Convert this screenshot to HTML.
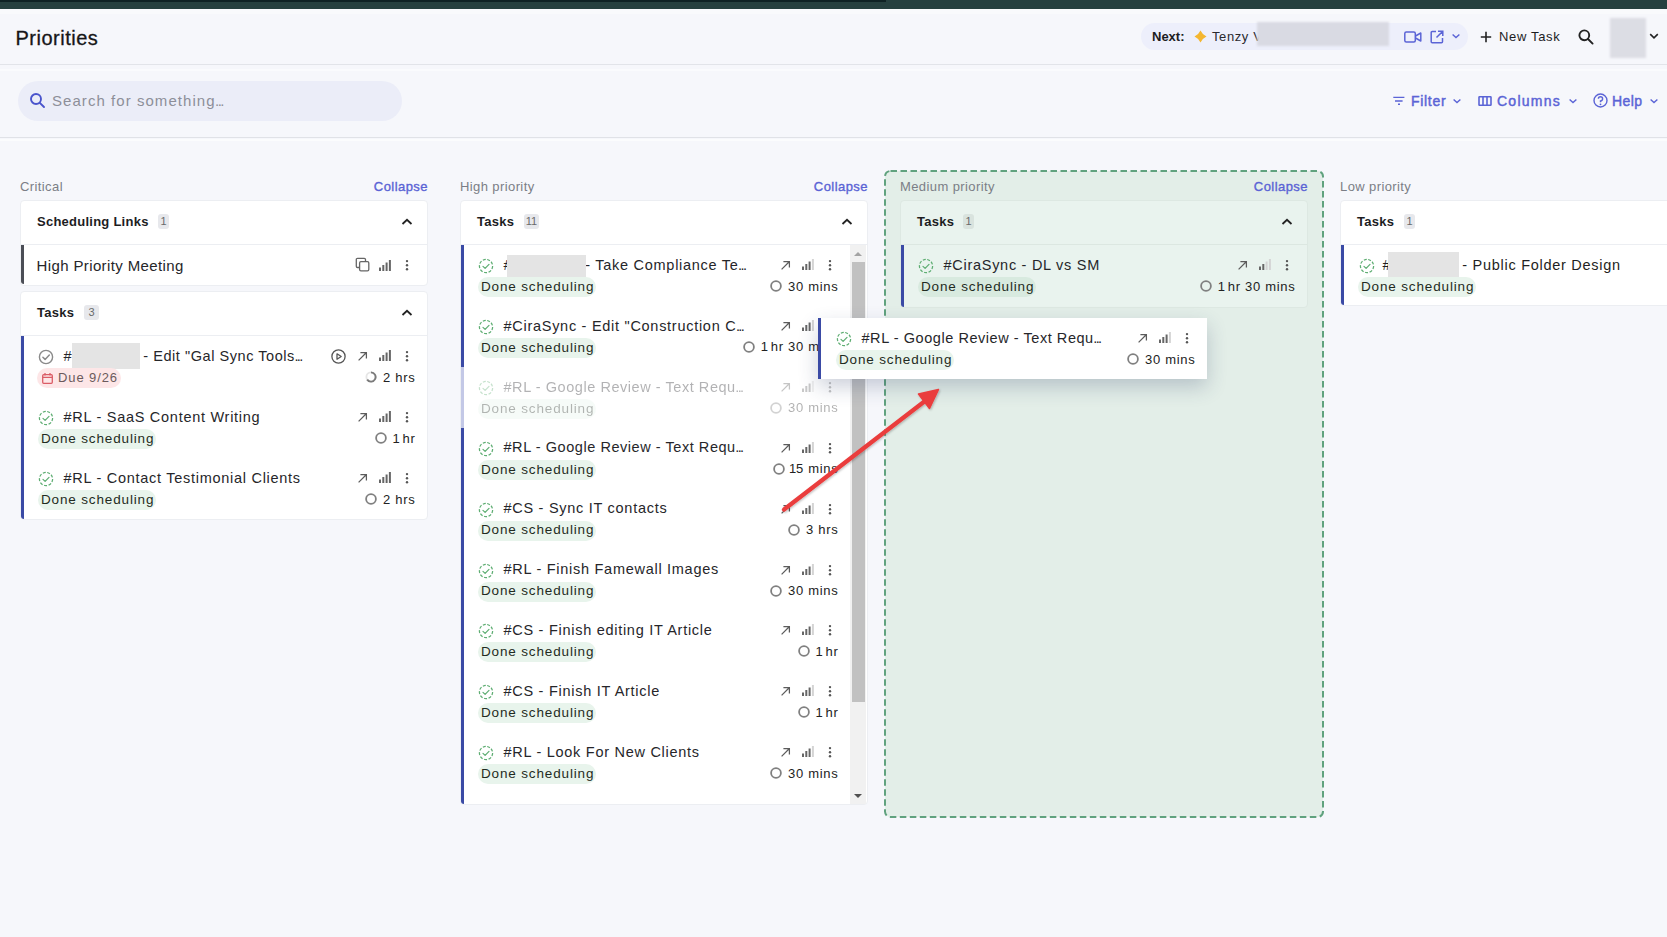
<!DOCTYPE html><html><head><meta charset="utf-8"><style>
html,body{margin:0;padding:0;}
body{width:1667px;height:937px;overflow:hidden;position:relative;background:#f6f7fb;font-family:"Liberation Sans", sans-serif;}
.t{position:absolute;white-space:nowrap;line-height:1;}
.ic{position:absolute;overflow:visible;}
.el{letter-spacing:-1.6px;margin-left:-0.5px}
.one{letter-spacing:-1.4px;margin-left:-0.8px}
.b{position:absolute;box-sizing:border-box;}

</style></head><body>
<div class="b" style="left:0px;top:0px;width:1667px;height:9px;background:#26403f;"></div>
<div class="b" style="left:0px;top:0px;width:886px;height:2px;background:#0f2224;"></div>
<div class="b" style="left:0px;top:9px;width:1667px;height:5px;background:#f9fafc;"></div>
<div class="b" style="left:0px;top:64px;width:1667px;height:1px;background:#e2e4e9;"></div>
<div class="t" style="left:15.5px;top:28.07px;font-size:20px;font-weight:400;color:#161618;letter-spacing:0.5px;-webkit-text-stroke:0.3px #161618;">Priorities</div>
<div class="b" style="left:1141px;top:23px;width:327px;height:27px;background:#edeffb;border-radius:14px;"></div>
<div class="t" style="left:1152px;top:30.00px;font-size:13px;font-weight:700;color:#1d1d1f;letter-spacing:0px;">Next:</div>
<svg class="ic" style="left:1193px;top:30px;" width="14" height="14" viewBox="0 0 14 14"><path d="M7.5 0.5 Q9.4 4.6 13.5 6.5 Q9.4 8.4 7.5 12.5 Q5.6 8.4 1.5 6.5 Q5.6 4.6 7.5 0.5 Z" fill="#f4b630"/></svg>
<div class="t" style="left:1212px;top:30.00px;font-size:13px;font-weight:400;color:#2a2a2e;letter-spacing:0.6px;">Tenzy V</div>
<div class="b" style="left:1257px;top:22px;width:132px;height:24px;background:#d9dae3;filter:blur(0.8px);"></div>
<svg class="ic" style="left:1404px;top:31px;" width="18" height="12" viewBox="0 0 18 12"><rect x="0.8" y="1" width="10.5" height="10" rx="1.5" fill="none" stroke="#5b64d6" stroke-width="1.5"/><path d="M11.5 5 L16.8 2 V10 L11.5 7" fill="none" stroke="#5b64d6" stroke-width="1.5" stroke-linejoin="round"/></svg>
<svg class="ic" style="left:1430px;top:30px;" width="14" height="14" viewBox="0 0 14 14"><path d="M6 1.5 H2.2 A1 1 0 0 0 1.2 2.5 V11.8 A1 1 0 0 0 2.2 12.8 H11.5 A1 1 0 0 0 12.5 11.8 V8 M8 1.2 H12.8 V6 M12.8 1.2 L6.5 7.5" fill="none" stroke="#5b64d6" stroke-width="1.5"/></svg>
<svg class="ic" style="left:1451px;top:33px;" width="10" height="6" viewBox="0 0 10 6"><path d="M1.6 1.4 L5 4.6 L8.4 1.4" fill="none" stroke="#5b64d6" stroke-width="1.4"/></svg>
<svg class="ic" style="left:1480px;top:31px;" width="12" height="12" viewBox="0 0 12 12"><path d="M6 0.8 V11.2 M0.8 6 H11.2" stroke="#222" stroke-width="1.6"/></svg>
<div class="t" style="left:1499px;top:30.00px;font-size:13px;font-weight:400;color:#1d1d1f;letter-spacing:0.65px;">New Task</div>
<svg class="ic" style="left:1578px;top:29px;" width="16" height="16" viewBox="0 0 16 16"><circle cx="6.3" cy="6.3" r="4.9" fill="none" stroke="#222" stroke-width="1.9"/><path d="M10 10 L14.6 14.6" stroke="#222" stroke-width="1.9" stroke-linecap="round"/></svg>
<div class="b" style="left:1610px;top:18px;width:36px;height:40px;background:#dcdde4;filter:blur(1px);"></div>
<svg class="ic" style="left:1649px;top:33px;" width="10" height="6" viewBox="0 0 10 6"><path d="M1.2 1.2 L5 4.8 L8.8 1.2" fill="none" stroke="#222" stroke-width="1.6"/></svg>
<div class="b" style="left:18px;top:81px;width:384px;height:40px;background:#ebedf8;border-radius:20px;"></div>
<svg class="ic" style="left:29px;top:92px;" width="17" height="17" viewBox="0 0 17 17"><circle cx="7" cy="7" r="5" fill="none" stroke="#4a54cc" stroke-width="1.9"/><path d="M10.8 10.8 L15 15" stroke="#4a54cc" stroke-width="1.9" stroke-linecap="round"/></svg>
<div class="t" style="left:52px;top:93.30px;font-size:15px;font-weight:400;color:#8d8f99;letter-spacing:1.05px;">Search for something<span class=el>...</span></div>
<div class="b" style="left:0px;top:137px;width:1667px;height:1px;background:#e0e2e7;"></div>
<div class="b" style="left:0px;top:139px;width:1667px;height:2px;background:#fbfcfd;"></div>
<div class="b" style="left:0px;top:69px;width:1667px;height:2px;background:#fafbfd;"></div>
<svg class="ic" style="left:1392px;top:95px;" width="14" height="11" viewBox="0 0 14 11"><path d="M1.3 2.4 H12.4 M3 6 H10.6 M6 9.3 H8" stroke="#5b64d6" stroke-width="1.4"/></svg>
<div class="t" style="left:1411px;top:94.15px;font-size:14px;font-weight:400;color:#5b64d6;letter-spacing:0.7px;-webkit-text-stroke:0.45px #5b64d6;">Filter</div>
<svg class="ic" style="left:1452px;top:98px;" width="10" height="6" viewBox="0 0 10 6"><path d="M1.6 1.4 L5 4.6 L8.4 1.4" fill="none" stroke="#5b64d6" stroke-width="1.4"/></svg>
<svg class="ic" style="left:1478px;top:95px;" width="15" height="11" viewBox="0 0 15 11"><rect x="1" y="1.7" width="12" height="8.6" rx="0.6" fill="none" stroke="#5b64d6" stroke-width="1.6"/><path d="M5 1.7 V10.3 M9 1.7 V10.3" stroke="#5b64d6" stroke-width="1.6"/></svg>
<div class="t" style="left:1497px;top:94.15px;font-size:14px;font-weight:400;color:#5b64d6;letter-spacing:1.25px;-webkit-text-stroke:0.45px #5b64d6;">Columns</div>
<svg class="ic" style="left:1568px;top:98px;" width="10" height="6" viewBox="0 0 10 6"><path d="M1.6 1.4 L5 4.6 L8.4 1.4" fill="none" stroke="#5b64d6" stroke-width="1.4"/></svg>
<svg class="ic" style="left:1593px;top:93px;" width="15" height="15" viewBox="0 0 15 15"><circle cx="7.5" cy="7.5" r="6.5" fill="none" stroke="#5b64d6" stroke-width="1.4"/><path d="M5.4 5.8 A2.1 2.1 0 1 1 7.5 7.9 V9.2" fill="none" stroke="#5b64d6" stroke-width="1.4"/><circle cx="7.5" cy="11.3" r="0.9" fill="#5b64d6"/></svg>
<div class="t" style="left:1612px;top:94.15px;font-size:14px;font-weight:400;color:#5b64d6;letter-spacing:0.4px;-webkit-text-stroke:0.45px #5b64d6;">Help</div>
<svg class="ic" style="left:1649px;top:98px;" width="10" height="6" viewBox="0 0 10 6"><path d="M1.6 1.4 L5 4.6 L8.4 1.4" fill="none" stroke="#5b64d6" stroke-width="1.4"/></svg>
<svg class="ic" style="left:884px;top:170px" width="440" height="648"><rect x="1" y="1" width="438" height="646" rx="5.5" fill="#e3eee8" stroke="#60a27e" stroke-width="2" stroke-dasharray="6.5 3.5"/></svg>
<div class="t" style="left:20px;top:179.50px;font-size:13px;font-weight:400;color:#7b7e86;letter-spacing:0.4px;">Critical</div>
<div class="t" style="right:1239px;top:179.50px;font-size:13px;font-weight:400;color:#5a63d5;letter-spacing:0.45px;-webkit-text-stroke:0.35px #5a63d5;">Collapse</div>
<div class="b" style="left:20px;top:200px;width:408px;height:86px;background:#fff;border:1px solid #eceef2;border-radius:4px;"></div>
<div class="b" style="left:21px;top:244px;width:406px;height:1px;background:#eceef2;"></div>
<div class="t" style="left:37px;top:215.00px;font-size:13px;font-weight:700;color:#1d1d1f;letter-spacing:0.25px;">Scheduling Links</div>
<div class="b" style="left:158px;top:214px;width:11px;height:15px;background:#e7e8ec;border-radius:3px;"></div>
<div class="t" style="left:163.5px;top:216.19px;font-size:11px;font-weight:400;color:#6a6a6a;letter-spacing:0px;transform:translateX(-50%);">1</div>
<svg class="ic" style="left:401px;top:218px;" width="12" height="8" viewBox="0 0 12 8"><path d="M1.5 6 L6 1.8 L10.5 6" fill="none" stroke="#222" stroke-width="1.8"/></svg>
<div class="b" style="left:21px;top:245px;width:3px;height:39px;background:#4b4e56;border-radius:0 0 0 3px;"></div>
<div class="t" style="left:36.5px;top:257.80px;font-size:15px;font-weight:400;color:#26262a;letter-spacing:0.38px;">High Priority Meeting</div>
<svg class="ic" style="left:355px;top:257px;" width="15" height="15" viewBox="0 0 15 15"><path d="M4 10.5 H2.5 A1.2 1.2 0 0 1 1.3 9.3 V2.5 A1.2 1.2 0 0 1 2.5 1.3 H9.3 A1.2 1.2 0 0 1 10.5 2.5 V4" fill="none" stroke="#666" stroke-width="1.3"/><rect x="4.6" y="4.6" width="9.2" height="9.2" rx="1.3" fill="none" stroke="#666" stroke-width="1.3"/></svg>
<svg class="ic" style="left:379px;top:260px;" width="12" height="11" viewBox="0 0 12 11"><rect x="0.0" y="7.5" width="2" height="3.5" fill="#666"/><rect x="3.3" y="5" width="2" height="6" fill="#666"/><rect x="6.6" y="2.5" width="2" height="8.5" fill="#666"/><rect x="9.9" y="0" width="2" height="11" fill="#666"/></svg>
<svg class="ic" style="left:405px;top:260px;" width="4" height="11" viewBox="0 0 4 11"><circle cx="2" cy="1.1" r="1.2" fill="#555"/><circle cx="2" cy="5.2" r="1.2" fill="#555"/><circle cx="2" cy="9.3" r="1.2" fill="#555"/></svg>
<div class="b" style="left:20px;top:291px;width:408px;height:229px;background:#fff;border:1px solid #eceef2;border-radius:4px;"></div>
<div class="b" style="left:21px;top:335px;width:406px;height:1px;background:#eceef2;"></div>
<div class="t" style="left:37px;top:306.00px;font-size:13px;font-weight:700;color:#1d1d1f;letter-spacing:0.25px;">Tasks</div>
<div class="b" style="left:84px;top:305px;width:15px;height:15px;background:#e7e8ec;border-radius:3px;"></div>
<div class="t" style="left:91.5px;top:307.19px;font-size:11px;font-weight:400;color:#6a6a6a;letter-spacing:0px;transform:translateX(-50%);">3</div>
<svg class="ic" style="left:401px;top:309px;" width="12" height="8" viewBox="0 0 12 8"><path d="M1.5 6 L6 1.8 L10.5 6" fill="none" stroke="#222" stroke-width="1.8"/></svg>
<div class="b" style="left:21px;top:336px;width:3px;height:183px;background:#3a4aa5;border-radius:0 0 0 3px;"></div>
<svg class="ic" style="left:38px;top:349px;" width="16" height="16" viewBox="0 0 16 16"><circle cx="8" cy="8" r="6.6" fill="none" stroke="#8a8a8a" stroke-width="1.4"/><path d="M4.9 8.2 L7.1 10.4 L11.3 6.1" fill="none" stroke="#8a8a8a" stroke-width="1.5" stroke-linecap="round" stroke-linejoin="round"/></svg>
<div class="t" style="left:63.5px;top:348.73px;font-size:14.5px;font-weight:400;color:#26262a;letter-spacing:0.72px;">#<span style="display:inline-block;width:71px"></span><span style="letter-spacing:0.55px">- Edit "Gal Sync Tools</span><span class=el>...</span></div>
<div class="b" style="left:72px;top:343px;width:68px;height:26px;background:#e4e4e4;filter:blur(0.6px);"></div>
<div class="b" style="left:37px;top:368px;width:84px;height:20px;background:#fde6e7;border-radius:10px;"></div>
<svg class="ic" style="left:42px;top:373px;" width="11" height="11" viewBox="0 0 11 11"><rect x="0.7" y="1.7" width="9.6" height="8.6" rx="1" fill="none" stroke="#db5c66" stroke-width="1.3"/><path d="M0.7 4.4 H10.3 M3 0 V2.5 M8 0 V2.5" stroke="#db5c66" stroke-width="1.3"/></svg>
<div class="t" style="left:58px;top:371.00px;font-size:13px;font-weight:400;color:#6b5a5c;letter-spacing:0.9px;">Due 9/26</div>
<svg class="ic" style="left:331px;top:349px;" width="15" height="15" viewBox="0 0 15 15"><circle cx="7.5" cy="7.5" r="6.6" fill="none" stroke="#555" stroke-width="1.3"/><path d="M6 4.8 L10.2 7.5 L6 10.2 Z" fill="none" stroke="#555" stroke-width="1.3" stroke-linejoin="round"/></svg>
<svg class="ic" style="left:357px;top:351px;" width="11" height="11" viewBox="0 0 11 11"><path d="M1.6 9.4 L9.2 1.8 M3.4 1.6 H9.4 V7.6" fill="none" stroke="#5c5c5c" stroke-width="1.25"/></svg>
<svg class="ic" style="left:379px;top:350px;" width="12" height="11" viewBox="0 0 12 11"><rect x="0.0" y="7.5" width="2" height="3.5" fill="#666"/><rect x="3.3" y="5" width="2" height="6" fill="#666"/><rect x="6.6" y="2.5" width="2" height="8.5" fill="#666"/><rect x="9.9" y="0" width="2" height="11" fill="#666"/></svg>
<svg class="ic" style="left:405px;top:351px;" width="4" height="11" viewBox="0 0 4 11"><circle cx="2" cy="1.1" r="1.2" fill="#555"/><circle cx="2" cy="5.2" r="1.2" fill="#555"/><circle cx="2" cy="9.3" r="1.2" fill="#555"/></svg>
<div class="t" style="right:1251.5px;top:370px;height:14px;display:flex;align-items:center;font-size:13px;color:#222;letter-spacing:0.7px;"><svg width="12" height="12" viewBox="0 0 12 12" style="margin-right:6px;flex:none"><circle cx="6" cy="6" r="4.6" fill="none" stroke="#e6e6e6" stroke-width="1.9"/><path d="M6 1.4 A4.6 4.6 0 1 1 2.2 8.6" fill="none" stroke="#7a7a7a" stroke-width="1.9"/></svg><span>2 hrs</span></div>
<svg class="ic" style="left:38px;top:410px;" width="16" height="16" viewBox="0 0 16 16"><circle cx="8" cy="8" r="6.6" fill="none" stroke="#5fae73" stroke-width="1.25" stroke-dasharray="3 1.6" transform="rotate(-80 8 8)"/><path d="M5 8.4 L7.1 10.4 L11 6.4" fill="none" stroke="#5fae73" stroke-width="1.25" stroke-linecap="round" stroke-linejoin="round"/></svg>
<div class="t" style="left:63.5px;top:409.73px;font-size:14.5px;font-weight:400;color:#26262a;letter-spacing:0.72px;">#RL - SaaS Content Writing</div>
<div class="b" style="left:38px;top:429px;width:118px;height:20px;background:#e8f4ec;border-radius:10px;"></div>
<div class="t" style="left:41px;top:431.87px;font-size:13.5px;font-weight:400;color:#1f2b22;letter-spacing:0.85px;">Done scheduling</div>
<svg class="ic" style="left:357px;top:412px;" width="11" height="11" viewBox="0 0 11 11"><path d="M1.6 9.4 L9.2 1.8 M3.4 1.6 H9.4 V7.6" fill="none" stroke="#5c5c5c" stroke-width="1.25"/></svg>
<svg class="ic" style="left:379px;top:411px;" width="12" height="11" viewBox="0 0 12 11"><rect x="0.0" y="7.5" width="2" height="3.5" fill="#666"/><rect x="3.3" y="5" width="2" height="6" fill="#666"/><rect x="6.6" y="2.5" width="2" height="8.5" fill="#666"/><rect x="9.9" y="0" width="2" height="11" fill="#666"/></svg>
<svg class="ic" style="left:405px;top:412px;" width="4" height="11" viewBox="0 0 4 11"><circle cx="2" cy="1.1" r="1.2" fill="#555"/><circle cx="2" cy="5.2" r="1.2" fill="#555"/><circle cx="2" cy="9.3" r="1.2" fill="#555"/></svg>
<div class="t" style="right:1251.5px;top:431px;height:14px;display:flex;align-items:center;font-size:13px;color:#222;letter-spacing:0.7px;"><svg width="12" height="12" viewBox="0 0 12 12" style="margin-right:6px;flex:none"><circle cx="6" cy="6" r="4.9" fill="none" stroke="#808080" stroke-width="1.8"/></svg><span><span class=one>1</span> hr</span></div>
<svg class="ic" style="left:38px;top:471px;" width="16" height="16" viewBox="0 0 16 16"><circle cx="8" cy="8" r="6.6" fill="none" stroke="#5fae73" stroke-width="1.25" stroke-dasharray="3 1.6" transform="rotate(-80 8 8)"/><path d="M5 8.4 L7.1 10.4 L11 6.4" fill="none" stroke="#5fae73" stroke-width="1.25" stroke-linecap="round" stroke-linejoin="round"/></svg>
<div class="t" style="left:63.5px;top:470.73px;font-size:14.5px;font-weight:400;color:#26262a;letter-spacing:0.72px;">#RL - Contact Testimonial Clients</div>
<div class="b" style="left:38px;top:490px;width:118px;height:20px;background:#e8f4ec;border-radius:10px;"></div>
<div class="t" style="left:41px;top:492.87px;font-size:13.5px;font-weight:400;color:#1f2b22;letter-spacing:0.85px;">Done scheduling</div>
<svg class="ic" style="left:357px;top:473px;" width="11" height="11" viewBox="0 0 11 11"><path d="M1.6 9.4 L9.2 1.8 M3.4 1.6 H9.4 V7.6" fill="none" stroke="#5c5c5c" stroke-width="1.25"/></svg>
<svg class="ic" style="left:379px;top:472px;" width="12" height="11" viewBox="0 0 12 11"><rect x="0.0" y="7.5" width="2" height="3.5" fill="#666"/><rect x="3.3" y="5" width="2" height="6" fill="#666"/><rect x="6.6" y="2.5" width="2" height="8.5" fill="#666"/><rect x="9.9" y="0" width="2" height="11" fill="#666"/></svg>
<svg class="ic" style="left:405px;top:473px;" width="4" height="11" viewBox="0 0 4 11"><circle cx="2" cy="1.1" r="1.2" fill="#555"/><circle cx="2" cy="5.2" r="1.2" fill="#555"/><circle cx="2" cy="9.3" r="1.2" fill="#555"/></svg>
<div class="t" style="right:1251.5px;top:492px;height:14px;display:flex;align-items:center;font-size:13px;color:#222;letter-spacing:0.7px;"><svg width="12" height="12" viewBox="0 0 12 12" style="margin-right:6px;flex:none"><circle cx="6" cy="6" r="4.9" fill="none" stroke="#808080" stroke-width="1.8"/></svg><span>2 hrs</span></div>
<div class="t" style="left:460px;top:179.50px;font-size:13px;font-weight:400;color:#7b7e86;letter-spacing:0.4px;">High priority</div>
<div class="t" style="right:799px;top:179.50px;font-size:13px;font-weight:400;color:#5a63d5;letter-spacing:0.45px;-webkit-text-stroke:0.35px #5a63d5;">Collapse</div>
<div class="b" style="left:460px;top:200px;width:408px;height:605px;background:#fff;border:1px solid #eceef2;border-radius:4px;"></div>
<div class="b" style="left:461px;top:244px;width:406px;height:1px;background:#eceef2;"></div>
<div class="t" style="left:477px;top:215.00px;font-size:13px;font-weight:700;color:#1d1d1f;letter-spacing:0.25px;">Tasks</div>
<div class="b" style="left:524px;top:214px;width:15px;height:15px;background:#e7e8ec;border-radius:3px;"></div>
<div class="t" style="left:531.5px;top:216.19px;font-size:11px;font-weight:400;color:#6a6a6a;letter-spacing:0px;transform:translateX(-50%);">11</div>
<svg class="ic" style="left:841px;top:218px;" width="12" height="8" viewBox="0 0 12 8"><path d="M1.5 6 L6 1.8 L10.5 6" fill="none" stroke="#222" stroke-width="1.8"/></svg>
<div class="b" style="left:461px;top:245px;width:3px;height:122px;background:#3a4aa5;"></div>
<div class="b" style="left:461px;top:367px;width:3px;height:61px;background:#c3c8e6;"></div>
<div class="b" style="left:461px;top:428px;width:3px;height:376px;background:#3a4aa5;border-radius:0 0 0 3px;"></div>
<svg class="ic" style="left:478px;top:258.0px;" width="16" height="16" viewBox="0 0 16 16"><circle cx="8" cy="8" r="6.6" fill="none" stroke="#5fae73" stroke-width="1.25" stroke-dasharray="3 1.6" transform="rotate(-80 8 8)"/><path d="M5 8.4 L7.1 10.4 L11 6.4" fill="none" stroke="#5fae73" stroke-width="1.25" stroke-linecap="round" stroke-linejoin="round"/></svg>
<div class="t" style="left:503.5px;top:257.73px;font-size:14.5px;font-weight:400;color:#26262a;letter-spacing:0.72px;">#<span style="display:inline-block;width:73px"></span>- Take Compliance Te<span class=el>...</span></div>
<div class="b" style="left:507px;top:255px;width:79px;height:24px;background:#e4e4e4;filter:blur(0.6px);"></div>
<div class="b" style="left:478px;top:277.0px;width:118px;height:20px;background:#e8f4ec;border-radius:10px;"></div>
<div class="t" style="left:481px;top:279.87px;font-size:13.5px;font-weight:400;color:#1f2b22;letter-spacing:0.85px;">Done scheduling</div>
<svg class="ic" style="left:780px;top:260.0px;" width="11" height="11" viewBox="0 0 11 11"><path d="M1.6 9.4 L9.2 1.8 M3.4 1.6 H9.4 V7.6" fill="none" stroke="#5c5c5c" stroke-width="1.25"/></svg>
<svg class="ic" style="left:802px;top:259.0px;" width="12" height="11" viewBox="0 0 12 11"><rect x="0.0" y="7.5" width="2" height="3.5" fill="#666"/><rect x="3.3" y="5" width="2" height="6" fill="#666"/><rect x="6.6" y="2.5" width="2" height="8.5" fill="#666"/><rect x="9.9" y="0" width="2" height="11" fill="#d4d4d4"/></svg>
<svg class="ic" style="left:828px;top:260.0px;" width="4" height="11" viewBox="0 0 4 11"><circle cx="2" cy="1.1" r="1.2" fill="#555"/><circle cx="2" cy="5.2" r="1.2" fill="#555"/><circle cx="2" cy="9.3" r="1.2" fill="#555"/></svg>
<div class="t" style="right:828.5px;top:279.0px;height:14px;display:flex;align-items:center;font-size:13px;color:#222;letter-spacing:0.7px;"><svg width="12" height="12" viewBox="0 0 12 12" style="margin-right:6px;flex:none"><circle cx="6" cy="6" r="4.9" fill="none" stroke="#808080" stroke-width="1.8"/></svg><span>30 mins</span></div>
<svg class="ic" style="left:478px;top:318.9px;" width="16" height="16" viewBox="0 0 16 16"><circle cx="8" cy="8" r="6.6" fill="none" stroke="#5fae73" stroke-width="1.25" stroke-dasharray="3 1.6" transform="rotate(-80 8 8)"/><path d="M5 8.4 L7.1 10.4 L11 6.4" fill="none" stroke="#5fae73" stroke-width="1.25" stroke-linecap="round" stroke-linejoin="round"/></svg>
<div class="t" style="left:503.5px;top:318.63px;font-size:14.5px;font-weight:400;color:#26262a;letter-spacing:0.72px;">#CiraSync - Edit "Construction C<span class=el>...</span></div>
<div class="b" style="left:478px;top:337.9px;width:118px;height:20px;background:#e8f4ec;border-radius:10px;"></div>
<div class="t" style="left:481px;top:340.77px;font-size:13.5px;font-weight:400;color:#1f2b22;letter-spacing:0.85px;">Done scheduling</div>
<svg class="ic" style="left:780px;top:320.9px;" width="11" height="11" viewBox="0 0 11 11"><path d="M1.6 9.4 L9.2 1.8 M3.4 1.6 H9.4 V7.6" fill="none" stroke="#5c5c5c" stroke-width="1.25"/></svg>
<svg class="ic" style="left:802px;top:319.9px;" width="12" height="11" viewBox="0 0 12 11"><rect x="0.0" y="7.5" width="2" height="3.5" fill="#666"/><rect x="3.3" y="5" width="2" height="6" fill="#666"/><rect x="6.6" y="2.5" width="2" height="8.5" fill="#666"/><rect x="9.9" y="0" width="2" height="11" fill="#d4d4d4"/></svg>
<svg class="ic" style="left:828px;top:320.9px;" width="4" height="11" viewBox="0 0 4 11"><circle cx="2" cy="1.1" r="1.2" fill="#555"/><circle cx="2" cy="5.2" r="1.2" fill="#555"/><circle cx="2" cy="9.3" r="1.2" fill="#555"/></svg>
<div class="t" style="right:828.5px;top:339.9px;height:14px;display:flex;align-items:center;font-size:13px;color:#222;letter-spacing:0.7px;"><svg width="12" height="12" viewBox="0 0 12 12" style="margin-right:6px;flex:none"><circle cx="6" cy="6" r="4.9" fill="none" stroke="#808080" stroke-width="1.8"/></svg><span><span class=one>1</span> hr 30 mins</span></div>
<div style="position:absolute;left:0;top:0;width:1667px;height:937px;opacity:0.35">
<svg class="ic" style="left:478px;top:379.8px;" width="16" height="16" viewBox="0 0 16 16"><circle cx="8" cy="8" r="6.6" fill="none" stroke="#5fae73" stroke-width="1.25" stroke-dasharray="3 1.6" transform="rotate(-80 8 8)"/><path d="M5 8.4 L7.1 10.4 L11 6.4" fill="none" stroke="#5fae73" stroke-width="1.25" stroke-linecap="round" stroke-linejoin="round"/></svg>
<div class="t" style="left:503.5px;top:379.53px;font-size:14.5px;font-weight:400;color:#26262a;letter-spacing:0.72px;"><span style="letter-spacing:0.55px">#RL - Google Review - Text Requ</span><span class=el>...</span></div>
<div class="b" style="left:478px;top:398.8px;width:118px;height:20px;background:#e8f4ec;border-radius:10px;"></div>
<div class="t" style="left:481px;top:401.67px;font-size:13.5px;font-weight:400;color:#1f2b22;letter-spacing:0.85px;">Done scheduling</div>
<svg class="ic" style="left:780px;top:381.8px;" width="11" height="11" viewBox="0 0 11 11"><path d="M1.6 9.4 L9.2 1.8 M3.4 1.6 H9.4 V7.6" fill="none" stroke="#5c5c5c" stroke-width="1.25"/></svg>
<svg class="ic" style="left:802px;top:380.8px;" width="12" height="11" viewBox="0 0 12 11"><rect x="0.0" y="7.5" width="2" height="3.5" fill="#666"/><rect x="3.3" y="5" width="2" height="6" fill="#666"/><rect x="6.6" y="2.5" width="2" height="8.5" fill="#666"/><rect x="9.9" y="0" width="2" height="11" fill="#d4d4d4"/></svg>
<svg class="ic" style="left:828px;top:381.8px;" width="4" height="11" viewBox="0 0 4 11"><circle cx="2" cy="1.1" r="1.2" fill="#555"/><circle cx="2" cy="5.2" r="1.2" fill="#555"/><circle cx="2" cy="9.3" r="1.2" fill="#555"/></svg>
<div class="t" style="right:828.5px;top:400.8px;height:14px;display:flex;align-items:center;font-size:13px;color:#222;letter-spacing:0.7px;"><svg width="12" height="12" viewBox="0 0 12 12" style="margin-right:6px;flex:none"><circle cx="6" cy="6" r="4.9" fill="none" stroke="#808080" stroke-width="1.8"/></svg><span>30 mins</span></div>
</div>
<svg class="ic" style="left:478px;top:440.7px;" width="16" height="16" viewBox="0 0 16 16"><circle cx="8" cy="8" r="6.6" fill="none" stroke="#5fae73" stroke-width="1.25" stroke-dasharray="3 1.6" transform="rotate(-80 8 8)"/><path d="M5 8.4 L7.1 10.4 L11 6.4" fill="none" stroke="#5fae73" stroke-width="1.25" stroke-linecap="round" stroke-linejoin="round"/></svg>
<div class="t" style="left:503.5px;top:440.43px;font-size:14.5px;font-weight:400;color:#26262a;letter-spacing:0.72px;"><span style="letter-spacing:0.55px">#RL - Google Review - Text Requ</span><span class=el>...</span></div>
<div class="b" style="left:478px;top:459.7px;width:118px;height:20px;background:#e8f4ec;border-radius:10px;"></div>
<div class="t" style="left:481px;top:462.57px;font-size:13.5px;font-weight:400;color:#1f2b22;letter-spacing:0.85px;">Done scheduling</div>
<svg class="ic" style="left:780px;top:442.7px;" width="11" height="11" viewBox="0 0 11 11"><path d="M1.6 9.4 L9.2 1.8 M3.4 1.6 H9.4 V7.6" fill="none" stroke="#5c5c5c" stroke-width="1.25"/></svg>
<svg class="ic" style="left:802px;top:441.7px;" width="12" height="11" viewBox="0 0 12 11"><rect x="0.0" y="7.5" width="2" height="3.5" fill="#666"/><rect x="3.3" y="5" width="2" height="6" fill="#666"/><rect x="6.6" y="2.5" width="2" height="8.5" fill="#666"/><rect x="9.9" y="0" width="2" height="11" fill="#d4d4d4"/></svg>
<svg class="ic" style="left:828px;top:442.7px;" width="4" height="11" viewBox="0 0 4 11"><circle cx="2" cy="1.1" r="1.2" fill="#555"/><circle cx="2" cy="5.2" r="1.2" fill="#555"/><circle cx="2" cy="9.3" r="1.2" fill="#555"/></svg>
<div class="t" style="right:828.5px;top:461.7px;height:14px;display:flex;align-items:center;font-size:13px;color:#222;letter-spacing:0.7px;"><svg width="12" height="12" viewBox="0 0 12 12" style="margin-right:6px;flex:none"><circle cx="6" cy="6" r="4.9" fill="none" stroke="#808080" stroke-width="1.8"/></svg><span><span style='margin-left:-1.6px;letter-spacing:-0.2px'>1</span>5 mins</span></div>
<svg class="ic" style="left:478px;top:501.6px;" width="16" height="16" viewBox="0 0 16 16"><circle cx="8" cy="8" r="6.6" fill="none" stroke="#5fae73" stroke-width="1.25" stroke-dasharray="3 1.6" transform="rotate(-80 8 8)"/><path d="M5 8.4 L7.1 10.4 L11 6.4" fill="none" stroke="#5fae73" stroke-width="1.25" stroke-linecap="round" stroke-linejoin="round"/></svg>
<div class="t" style="left:503.5px;top:501.33px;font-size:14.5px;font-weight:400;color:#26262a;letter-spacing:0.72px;">#CS - Sync IT contacts</div>
<div class="b" style="left:478px;top:520.6px;width:118px;height:20px;background:#e8f4ec;border-radius:10px;"></div>
<div class="t" style="left:481px;top:523.47px;font-size:13.5px;font-weight:400;color:#1f2b22;letter-spacing:0.85px;">Done scheduling</div>
<svg class="ic" style="left:780px;top:503.6px;" width="11" height="11" viewBox="0 0 11 11"><path d="M1.6 9.4 L9.2 1.8 M3.4 1.6 H9.4 V7.6" fill="none" stroke="#5c5c5c" stroke-width="1.25"/></svg>
<svg class="ic" style="left:802px;top:502.6px;" width="12" height="11" viewBox="0 0 12 11"><rect x="0.0" y="7.5" width="2" height="3.5" fill="#666"/><rect x="3.3" y="5" width="2" height="6" fill="#666"/><rect x="6.6" y="2.5" width="2" height="8.5" fill="#666"/><rect x="9.9" y="0" width="2" height="11" fill="#d4d4d4"/></svg>
<svg class="ic" style="left:828px;top:503.6px;" width="4" height="11" viewBox="0 0 4 11"><circle cx="2" cy="1.1" r="1.2" fill="#555"/><circle cx="2" cy="5.2" r="1.2" fill="#555"/><circle cx="2" cy="9.3" r="1.2" fill="#555"/></svg>
<div class="t" style="right:828.5px;top:522.6px;height:14px;display:flex;align-items:center;font-size:13px;color:#222;letter-spacing:0.7px;"><svg width="12" height="12" viewBox="0 0 12 12" style="margin-right:6px;flex:none"><circle cx="6" cy="6" r="4.9" fill="none" stroke="#808080" stroke-width="1.8"/></svg><span>3 hrs</span></div>
<svg class="ic" style="left:478px;top:562.5px;" width="16" height="16" viewBox="0 0 16 16"><circle cx="8" cy="8" r="6.6" fill="none" stroke="#5fae73" stroke-width="1.25" stroke-dasharray="3 1.6" transform="rotate(-80 8 8)"/><path d="M5 8.4 L7.1 10.4 L11 6.4" fill="none" stroke="#5fae73" stroke-width="1.25" stroke-linecap="round" stroke-linejoin="round"/></svg>
<div class="t" style="left:503.5px;top:562.23px;font-size:14.5px;font-weight:400;color:#26262a;letter-spacing:0.72px;">#RL - Finish Famewall Images</div>
<div class="b" style="left:478px;top:581.5px;width:118px;height:20px;background:#e8f4ec;border-radius:10px;"></div>
<div class="t" style="left:481px;top:584.37px;font-size:13.5px;font-weight:400;color:#1f2b22;letter-spacing:0.85px;">Done scheduling</div>
<svg class="ic" style="left:780px;top:564.5px;" width="11" height="11" viewBox="0 0 11 11"><path d="M1.6 9.4 L9.2 1.8 M3.4 1.6 H9.4 V7.6" fill="none" stroke="#5c5c5c" stroke-width="1.25"/></svg>
<svg class="ic" style="left:802px;top:563.5px;" width="12" height="11" viewBox="0 0 12 11"><rect x="0.0" y="7.5" width="2" height="3.5" fill="#666"/><rect x="3.3" y="5" width="2" height="6" fill="#666"/><rect x="6.6" y="2.5" width="2" height="8.5" fill="#666"/><rect x="9.9" y="0" width="2" height="11" fill="#d4d4d4"/></svg>
<svg class="ic" style="left:828px;top:564.5px;" width="4" height="11" viewBox="0 0 4 11"><circle cx="2" cy="1.1" r="1.2" fill="#555"/><circle cx="2" cy="5.2" r="1.2" fill="#555"/><circle cx="2" cy="9.3" r="1.2" fill="#555"/></svg>
<div class="t" style="right:828.5px;top:583.5px;height:14px;display:flex;align-items:center;font-size:13px;color:#222;letter-spacing:0.7px;"><svg width="12" height="12" viewBox="0 0 12 12" style="margin-right:6px;flex:none"><circle cx="6" cy="6" r="4.9" fill="none" stroke="#808080" stroke-width="1.8"/></svg><span>30 mins</span></div>
<svg class="ic" style="left:478px;top:623.4px;" width="16" height="16" viewBox="0 0 16 16"><circle cx="8" cy="8" r="6.6" fill="none" stroke="#5fae73" stroke-width="1.25" stroke-dasharray="3 1.6" transform="rotate(-80 8 8)"/><path d="M5 8.4 L7.1 10.4 L11 6.4" fill="none" stroke="#5fae73" stroke-width="1.25" stroke-linecap="round" stroke-linejoin="round"/></svg>
<div class="t" style="left:503.5px;top:623.13px;font-size:14.5px;font-weight:400;color:#26262a;letter-spacing:0.72px;">#CS - Finish editing IT Article</div>
<div class="b" style="left:478px;top:642.4px;width:118px;height:20px;background:#e8f4ec;border-radius:10px;"></div>
<div class="t" style="left:481px;top:645.27px;font-size:13.5px;font-weight:400;color:#1f2b22;letter-spacing:0.85px;">Done scheduling</div>
<svg class="ic" style="left:780px;top:625.4px;" width="11" height="11" viewBox="0 0 11 11"><path d="M1.6 9.4 L9.2 1.8 M3.4 1.6 H9.4 V7.6" fill="none" stroke="#5c5c5c" stroke-width="1.25"/></svg>
<svg class="ic" style="left:802px;top:624.4px;" width="12" height="11" viewBox="0 0 12 11"><rect x="0.0" y="7.5" width="2" height="3.5" fill="#666"/><rect x="3.3" y="5" width="2" height="6" fill="#666"/><rect x="6.6" y="2.5" width="2" height="8.5" fill="#666"/><rect x="9.9" y="0" width="2" height="11" fill="#d4d4d4"/></svg>
<svg class="ic" style="left:828px;top:625.4px;" width="4" height="11" viewBox="0 0 4 11"><circle cx="2" cy="1.1" r="1.2" fill="#555"/><circle cx="2" cy="5.2" r="1.2" fill="#555"/><circle cx="2" cy="9.3" r="1.2" fill="#555"/></svg>
<div class="t" style="right:828.5px;top:644.4px;height:14px;display:flex;align-items:center;font-size:13px;color:#222;letter-spacing:0.7px;"><svg width="12" height="12" viewBox="0 0 12 12" style="margin-right:6px;flex:none"><circle cx="6" cy="6" r="4.9" fill="none" stroke="#808080" stroke-width="1.8"/></svg><span><span class=one>1</span> hr</span></div>
<svg class="ic" style="left:478px;top:684.3px;" width="16" height="16" viewBox="0 0 16 16"><circle cx="8" cy="8" r="6.6" fill="none" stroke="#5fae73" stroke-width="1.25" stroke-dasharray="3 1.6" transform="rotate(-80 8 8)"/><path d="M5 8.4 L7.1 10.4 L11 6.4" fill="none" stroke="#5fae73" stroke-width="1.25" stroke-linecap="round" stroke-linejoin="round"/></svg>
<div class="t" style="left:503.5px;top:684.03px;font-size:14.5px;font-weight:400;color:#26262a;letter-spacing:0.72px;">#CS - Finish IT Article</div>
<div class="b" style="left:478px;top:703.3px;width:118px;height:20px;background:#e8f4ec;border-radius:10px;"></div>
<div class="t" style="left:481px;top:706.17px;font-size:13.5px;font-weight:400;color:#1f2b22;letter-spacing:0.85px;">Done scheduling</div>
<svg class="ic" style="left:780px;top:686.3px;" width="11" height="11" viewBox="0 0 11 11"><path d="M1.6 9.4 L9.2 1.8 M3.4 1.6 H9.4 V7.6" fill="none" stroke="#5c5c5c" stroke-width="1.25"/></svg>
<svg class="ic" style="left:802px;top:685.3px;" width="12" height="11" viewBox="0 0 12 11"><rect x="0.0" y="7.5" width="2" height="3.5" fill="#666"/><rect x="3.3" y="5" width="2" height="6" fill="#666"/><rect x="6.6" y="2.5" width="2" height="8.5" fill="#666"/><rect x="9.9" y="0" width="2" height="11" fill="#d4d4d4"/></svg>
<svg class="ic" style="left:828px;top:686.3px;" width="4" height="11" viewBox="0 0 4 11"><circle cx="2" cy="1.1" r="1.2" fill="#555"/><circle cx="2" cy="5.2" r="1.2" fill="#555"/><circle cx="2" cy="9.3" r="1.2" fill="#555"/></svg>
<div class="t" style="right:828.5px;top:705.3px;height:14px;display:flex;align-items:center;font-size:13px;color:#222;letter-spacing:0.7px;"><svg width="12" height="12" viewBox="0 0 12 12" style="margin-right:6px;flex:none"><circle cx="6" cy="6" r="4.9" fill="none" stroke="#808080" stroke-width="1.8"/></svg><span><span class=one>1</span> hr</span></div>
<svg class="ic" style="left:478px;top:745.2px;" width="16" height="16" viewBox="0 0 16 16"><circle cx="8" cy="8" r="6.6" fill="none" stroke="#5fae73" stroke-width="1.25" stroke-dasharray="3 1.6" transform="rotate(-80 8 8)"/><path d="M5 8.4 L7.1 10.4 L11 6.4" fill="none" stroke="#5fae73" stroke-width="1.25" stroke-linecap="round" stroke-linejoin="round"/></svg>
<div class="t" style="left:503.5px;top:744.93px;font-size:14.5px;font-weight:400;color:#26262a;letter-spacing:0.72px;">#RL - Look For New Clients</div>
<div class="b" style="left:478px;top:764.2px;width:118px;height:20px;background:#e8f4ec;border-radius:10px;"></div>
<div class="t" style="left:481px;top:767.07px;font-size:13.5px;font-weight:400;color:#1f2b22;letter-spacing:0.85px;">Done scheduling</div>
<svg class="ic" style="left:780px;top:747.2px;" width="11" height="11" viewBox="0 0 11 11"><path d="M1.6 9.4 L9.2 1.8 M3.4 1.6 H9.4 V7.6" fill="none" stroke="#5c5c5c" stroke-width="1.25"/></svg>
<svg class="ic" style="left:802px;top:746.2px;" width="12" height="11" viewBox="0 0 12 11"><rect x="0.0" y="7.5" width="2" height="3.5" fill="#666"/><rect x="3.3" y="5" width="2" height="6" fill="#666"/><rect x="6.6" y="2.5" width="2" height="8.5" fill="#666"/><rect x="9.9" y="0" width="2" height="11" fill="#d4d4d4"/></svg>
<svg class="ic" style="left:828px;top:747.2px;" width="4" height="11" viewBox="0 0 4 11"><circle cx="2" cy="1.1" r="1.2" fill="#555"/><circle cx="2" cy="5.2" r="1.2" fill="#555"/><circle cx="2" cy="9.3" r="1.2" fill="#555"/></svg>
<div class="t" style="right:828.5px;top:766.2px;height:14px;display:flex;align-items:center;font-size:13px;color:#222;letter-spacing:0.7px;"><svg width="12" height="12" viewBox="0 0 12 12" style="margin-right:6px;flex:none"><circle cx="6" cy="6" r="4.9" fill="none" stroke="#808080" stroke-width="1.8"/></svg><span>30 mins</span></div>
<div class="b" style="left:850px;top:245px;width:16px;height:559px;background:#f1f1f1;"></div>
<div class="b" style="left:852px;top:262px;width:13px;height:440px;background:#c1c1c1;"></div>
<svg class="ic" style="left:853px;top:251px;" width="10" height="6" viewBox="0 0 10 6"><path d="M1 5 L5 1 L9 5 Z" fill="#a3a3a3"/></svg>
<svg class="ic" style="left:853px;top:793px;" width="10" height="6" viewBox="0 0 10 6"><path d="M1 1 L5 5 L9 1 Z" fill="#505050"/></svg>
<div class="t" style="left:900px;top:179.50px;font-size:13px;font-weight:400;color:#7b7e86;letter-spacing:0.4px;">Medium priority</div>
<div class="t" style="right:359px;top:179.50px;font-size:13px;font-weight:400;color:#5a63d5;letter-spacing:0.45px;-webkit-text-stroke:0.35px #5a63d5;">Collapse</div>
<div class="b" style="left:900px;top:200px;width:408px;height:108px;background:#e9f3ee;border:1px solid #dde8e2;border-radius:4px;"></div>
<div class="b" style="left:901px;top:244px;width:406px;height:1px;background:#dce7e1;"></div>
<div class="t" style="left:917px;top:215.00px;font-size:13px;font-weight:700;color:#1d1d1f;letter-spacing:0.25px;">Tasks</div>
<div class="b" style="left:963px;top:214px;width:11px;height:15px;background:#d9e3de;border-radius:3px;"></div>
<div class="t" style="left:968.5px;top:216.19px;font-size:11px;font-weight:400;color:#6a6a6a;letter-spacing:0px;transform:translateX(-50%);">1</div>
<svg class="ic" style="left:1281px;top:218px;" width="12" height="8" viewBox="0 0 12 8"><path d="M1.5 6 L6 1.8 L10.5 6" fill="none" stroke="#222" stroke-width="1.8"/></svg>
<div class="b" style="left:901px;top:245px;width:3px;height:62px;background:#3a4aa5;border-radius:0 0 0 3px;"></div>
<svg class="ic" style="left:918px;top:258px;" width="16" height="16" viewBox="0 0 16 16"><circle cx="8" cy="8" r="6.6" fill="none" stroke="#5fae73" stroke-width="1.25" stroke-dasharray="3 1.6" transform="rotate(-80 8 8)"/><path d="M5 8.4 L7.1 10.4 L11 6.4" fill="none" stroke="#5fae73" stroke-width="1.25" stroke-linecap="round" stroke-linejoin="round"/></svg>
<div class="t" style="left:943.5px;top:257.73px;font-size:14.5px;font-weight:400;color:#26262a;letter-spacing:0.72px;">#CiraSync - DL vs SM</div>
<div class="b" style="left:918px;top:277px;width:118px;height:20px;background:#d8eadf;border-radius:10px;"></div>
<div class="t" style="left:921px;top:279.87px;font-size:13.5px;font-weight:400;color:#1f2b22;letter-spacing:0.85px;">Done scheduling</div>
<svg class="ic" style="left:1237px;top:260px;" width="11" height="11" viewBox="0 0 11 11"><path d="M1.6 9.4 L9.2 1.8 M3.4 1.6 H9.4 V7.6" fill="none" stroke="#5c5c5c" stroke-width="1.25"/></svg>
<svg class="ic" style="left:1259px;top:259px;" width="12" height="11" viewBox="0 0 12 11"><rect x="0.0" y="7.5" width="2" height="3.5" fill="#666"/><rect x="3.3" y="5" width="2" height="6" fill="#666"/><rect x="6.6" y="2.5" width="2" height="8.5" fill="#d4d4d4"/><rect x="9.9" y="0" width="2" height="11" fill="#d4d4d4"/></svg>
<svg class="ic" style="left:1285px;top:260px;" width="4" height="11" viewBox="0 0 4 11"><circle cx="2" cy="1.1" r="1.2" fill="#555"/><circle cx="2" cy="5.2" r="1.2" fill="#555"/><circle cx="2" cy="9.3" r="1.2" fill="#555"/></svg>
<div class="t" style="right:371.5px;top:279px;height:14px;display:flex;align-items:center;font-size:13px;color:#222;letter-spacing:0.7px;"><svg width="12" height="12" viewBox="0 0 12 12" style="margin-right:6px;flex:none"><circle cx="6" cy="6" r="4.9" fill="none" stroke="#808080" stroke-width="1.8"/></svg><span><span class=one>1</span> hr 30 mins</span></div>
<div class="t" style="left:1340px;top:179.50px;font-size:13px;font-weight:400;color:#7b7e86;letter-spacing:0.4px;">Low priority</div>
<div class="t" style="right:-81px;top:179.50px;font-size:13px;font-weight:400;color:#5a63d5;letter-spacing:0.45px;-webkit-text-stroke:0.35px #5a63d5;">Collapse</div>
<div class="b" style="left:1340px;top:200px;width:408px;height:106px;background:#fff;border:1px solid #eceef2;border-radius:4px;"></div>
<div class="b" style="left:1341px;top:244px;width:406px;height:1px;background:#eceef2;"></div>
<div class="t" style="left:1357px;top:215.00px;font-size:13px;font-weight:700;color:#1d1d1f;letter-spacing:0.25px;">Tasks</div>
<div class="b" style="left:1404px;top:214px;width:11px;height:15px;background:#e7e8ec;border-radius:3px;"></div>
<div class="t" style="left:1409.5px;top:216.19px;font-size:11px;font-weight:400;color:#6a6a6a;letter-spacing:0px;transform:translateX(-50%);">1</div>
<div class="b" style="left:1341px;top:245px;width:3px;height:60px;background:#3a4aa5;border-radius:0 0 0 3px;"></div>
<svg class="ic" style="left:1359px;top:258px;" width="16" height="16" viewBox="0 0 16 16"><circle cx="8" cy="8" r="6.6" fill="none" stroke="#5fae73" stroke-width="1.25" stroke-dasharray="3 1.6" transform="rotate(-80 8 8)"/><path d="M5 8.4 L7.1 10.4 L11 6.4" fill="none" stroke="#5fae73" stroke-width="1.25" stroke-linecap="round" stroke-linejoin="round"/></svg>
<div class="t" style="left:1382.5px;top:257.73px;font-size:14.5px;font-weight:400;color:#1f1f22;letter-spacing:0.72px;">#<span style="display:inline-block;width:71px"></span>- Public Folder Design</div>
<div class="b" style="left:1388px;top:252px;width:71px;height:29px;background:#e4e4e4;filter:blur(0.6px);"></div>
<div class="b" style="left:1358px;top:277px;width:118px;height:20px;background:#e8f4ec;border-radius:10px;"></div>
<div class="t" style="left:1361px;top:279.87px;font-size:13.5px;font-weight:400;color:#1f2b22;letter-spacing:0.85px;">Done scheduling</div>
<div class="b" style="left:818px;top:318px;width:389px;height:61px;background:#fff;box-shadow:0 8px 20px rgba(40,60,100,0.24);"></div>
<div class="b" style="left:818px;top:318px;width:3px;height:61px;background:#3a4aa5;"></div>
<svg class="ic" style="left:836px;top:331px;" width="16" height="16" viewBox="0 0 16 16"><circle cx="8" cy="8" r="6.6" fill="none" stroke="#5fae73" stroke-width="1.25" stroke-dasharray="3 1.6" transform="rotate(-80 8 8)"/><path d="M5 8.4 L7.1 10.4 L11 6.4" fill="none" stroke="#5fae73" stroke-width="1.25" stroke-linecap="round" stroke-linejoin="round"/></svg>
<div class="t" style="left:861.5px;top:330.73px;font-size:14.5px;font-weight:400;color:#26262a;letter-spacing:0.72px;"><span style="letter-spacing:0.55px">#RL - Google Review - Text Requ</span><span class=el>...</span></div>
<div class="b" style="left:836px;top:350px;width:118px;height:20px;background:#e8f4ec;border-radius:10px;"></div>
<div class="t" style="left:839px;top:352.87px;font-size:13.5px;font-weight:400;color:#1f2b22;letter-spacing:0.85px;">Done scheduling</div>
<svg class="ic" style="left:1137px;top:333px;" width="11" height="11" viewBox="0 0 11 11"><path d="M1.6 9.4 L9.2 1.8 M3.4 1.6 H9.4 V7.6" fill="none" stroke="#5c5c5c" stroke-width="1.25"/></svg>
<svg class="ic" style="left:1159px;top:332px;" width="12" height="11" viewBox="0 0 12 11"><rect x="0.0" y="7.5" width="2" height="3.5" fill="#666"/><rect x="3.3" y="5" width="2" height="6" fill="#666"/><rect x="6.6" y="2.5" width="2" height="8.5" fill="#666"/><rect x="9.9" y="0" width="2" height="11" fill="#d4d4d4"/></svg>
<svg class="ic" style="left:1185px;top:333px;" width="4" height="11" viewBox="0 0 4 11"><circle cx="2" cy="1.1" r="1.2" fill="#555"/><circle cx="2" cy="5.2" r="1.2" fill="#555"/><circle cx="2" cy="9.3" r="1.2" fill="#555"/></svg>
<div class="t" style="right:471.5px;top:352px;height:14px;display:flex;align-items:center;font-size:13px;color:#222;letter-spacing:0.7px;"><svg width="12" height="12" viewBox="0 0 12 12" style="margin-right:6px;flex:none"><circle cx="6" cy="6" r="4.9" fill="none" stroke="#808080" stroke-width="1.8"/></svg><span>30 mins</span></div>
<svg class="ic" style="left:0;top:0" width="1667" height="937"><defs><filter id="sh" x="-20%" y="-20%" width="140%" height="140%"><feDropShadow dx="1" dy="1" stdDeviation="1" flood-color="#000" flood-opacity="0.25"/></filter></defs><g filter="url(#sh)"><path d="M784 509.5 L925 401" stroke="#ea3d3d" stroke-width="4.2" stroke-linecap="round"/><path d="M938.5 389.5 L918.5 394 L929.5 408.5 Z" fill="#ea3d3d" stroke="#ea3d3d" stroke-width="1.5" stroke-linejoin="round"/></g></svg>
</body></html>
